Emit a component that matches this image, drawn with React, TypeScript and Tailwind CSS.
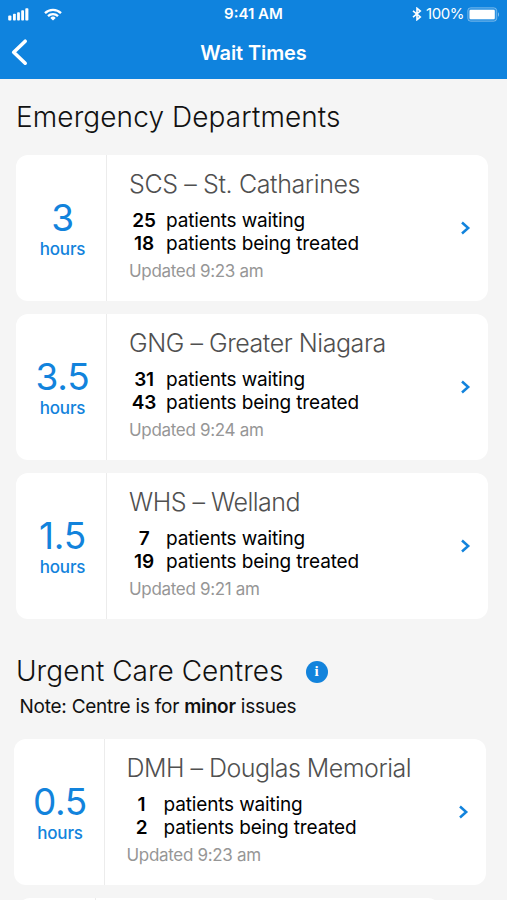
import clsx from "clsx";

type Site = {
  wait: string;
  name: string;
  nameTracking: string;
  waiting: number;
  treated: number;
  updated: string;
};

const emergency: Site[] = [
  { wait: "3", name: "SCS – St. Catharines", nameTracking: "tracking-[-0.38px]", waiting: 25, treated: 18, updated: "9:23 am" },
  { wait: "3.5", name: "GNG – Greater Niagara", nameTracking: "tracking-[-0.45px]", waiting: 31, treated: 43, updated: "9:24 am" },
  { wait: "1.5", name: "WHS – Welland", nameTracking: "tracking-[-0.5px]", waiting: 7, treated: 19, updated: "9:21 am" },
];

const urgent: Site = {
  wait: "0.5",
  name: "DMH – Douglas Memorial",
  nameTracking: "tracking-[-0.52px]",
  waiting: 1,
  treated: 2,
  updated: "9:23 am",
};

function StatusBar() {
  return (
    <div className="grid h-7 grid-cols-3 items-center text-white">
      <div className="flex items-center pl-2">
        <svg width="21" height="13" viewBox="0 0 21 13" fill="currentColor">
          <rect x="0.2" y="7.6" width="3.2" height="4.9" rx="0.9" />
          <rect x="5" y="5.8" width="2.8" height="6.7" rx="0.8" />
          <rect x="9.1" y="4.2" width="2.8" height="8.3" rx="0.8" />
          <rect x="13.2" y="2.2" width="2.8" height="10.3" rx="0.8" />
          <rect x="17.3" y="0.3" width="3.1" height="12.2" rx="0.8" />
        </svg>
        <svg className="ml-[15px]" width="18" height="13" viewBox="0 0 18 13" fill="none" stroke="currentColor" strokeWidth="2.3">
          <path d="M1 5.1a11.3 11.3 0 0 1 16 0" />
          <path d="M4 8.1a7.1 7.1 0 0 1 10 0" />
          <path d="M9 12.6 6.3 9.9a3.8 3.8 0 0 1 5.4 0Z" fill="currentColor" stroke="none" />
        </svg>
      </div>
      <div className="text-center text-[15px] leading-5 font-semibold">9:41 AM</div>
      <div className="flex items-center justify-end pr-[7px]">
        <svg width="10" height="14" viewBox="0 0 10 14" fill="none" stroke="currentColor" strokeWidth="1.6">
          <path d="m1 3.8 7.3 6.1L5 12.7V1.3l3.3 2.8L1 10.2" />
        </svg>
        <span className="ml-1 text-[15px] leading-5 tracking-[-0.45px]">100%</span>
        <svg className="ml-[3px]" width="33" height="15" viewBox="0 0 33 15">
          <rect x="0.75" y="0.75" width="29" height="13.5" rx="3" fill="#fff" fillOpacity="0.12" stroke="#fff" strokeOpacity="0.35" />
          <rect x="2.5" y="2.8" width="25.3" height="9.4" rx="1.2" fill="#fff" />
          <path d="M31 5.2v4.5c1.3-.6 1.3-3.9 0-4.5Z" fill="#fff" fillOpacity="0.5" />
        </svg>
      </div>
    </div>
  );
}

function WaitCard({ site, className }: { site: Site; className?: string }) {
  return (
    <div className={clsx("flex h-[146px] w-[472px] rounded-xl bg-white", className)}>
      <div className="w-[91px] border-r-[1.5px] border-[#ececec] pt-[41px] pl-[3px] text-center text-[#1283dc]">
        <div className="text-[37px] leading-[44px] tracking-[-0.3px]">{site.wait}</div>
        <div className="text-[17px] leading-[18px] font-medium tracking-[-0.2px]">hours</div>
      </div>
      <div className="flex-1 pt-[13px] pl-[22px] text-black">
        <div className={clsx("h-[32px] text-[25px] leading-[32px] font-light whitespace-nowrap text-[#505050]", site.nameTracking)}>
          {site.name}
        </div>
        <div className="mt-[9px] flex text-[19px] leading-[23px]">
          <div className="w-[30px] pt-px text-center leading-[22.5px] font-semibold tracking-[-0.2px]">
            <div>{site.waiting}</div>
            <div>{site.treated}</div>
          </div>
          <div className="ml-[7px] tracking-[-0.15px]">
            <div>patients waiting</div>
            <div>patients being treated</div>
          </div>
        </div>
        <div className="mt-[6px] text-[17px] leading-5 tracking-[-0.32px] text-[#969696]">Updated {site.updated}</div>
      </div>
      <svg className="mt-[66px] mr-4" width="12" height="14" viewBox="0 0 12 14" fill="none" stroke="#1283dc" strokeWidth="2.5">
        <path d="m2 1.5 6.2 5.5L2 12.5" />
      </svg>
    </div>
  );
}

function App() {
  return (
    <div className="h-[900px] w-[507px] overflow-hidden bg-[#f5f5f5] font-[Inter,sans-serif]">
      <header className="h-[79px] bg-[#0f83de] text-white">
        <StatusBar />
        <div className="relative flex h-12 items-center justify-center">
          <svg className="absolute top-[10px] left-[10px]" width="18" height="28" viewBox="0 0 18 28" fill="none" stroke="currentColor" strokeWidth="3.6" strokeLinecap="round" strokeLinejoin="round">
            <path d="M15.2 3.2 3.7 14.2l11.5 11" />
          </svg>
          <h1 className="pt-px text-[20px] leading-6 font-semibold tracking-[-0.1px]">Wait Times</h1>
        </div>
      </header>

      <main>
        <h2 className="pt-5 pl-4 text-[28px] leading-9 font-light tracking-[0.1px] text-[#111]">Emergency Departments</h2>
        <div className="mt-5 ml-4 flex flex-col gap-[13px]">
          {emergency.map((site) => (
            <WaitCard key={site.name} site={site} />
          ))}
        </div>

        <div className="mt-[34px] flex items-center pl-4">
          <h2 className="text-[28px] leading-9 font-light tracking-[0.02px] text-[#111]">Urgent Care Centres</h2>
          <span className="mt-px ml-[22px] flex size-[22px] items-center justify-center rounded-full bg-[#1283dc] font-['Liberation_Serif',serif] text-[15px] leading-none font-bold text-white">
            i
          </span>
        </div>
        <p className="mt-[6px] pl-[19.5px] text-[19px] leading-6 tracking-[-0.25px] text-[#111]">
          Note: Centre is for <b className="font-semibold">minor</b> issues
        </p>
        <WaitCard site={urgent} className="mt-5 ml-[13.5px]" />
        <div className="mt-[13px] ml-[18px] h-[146px] w-[422px] rounded-xl bg-white">
          <div className="h-full w-[78px] border-r border-[#ececec]" />
        </div>
      </main>
    </div>
  );
}

export default App;
